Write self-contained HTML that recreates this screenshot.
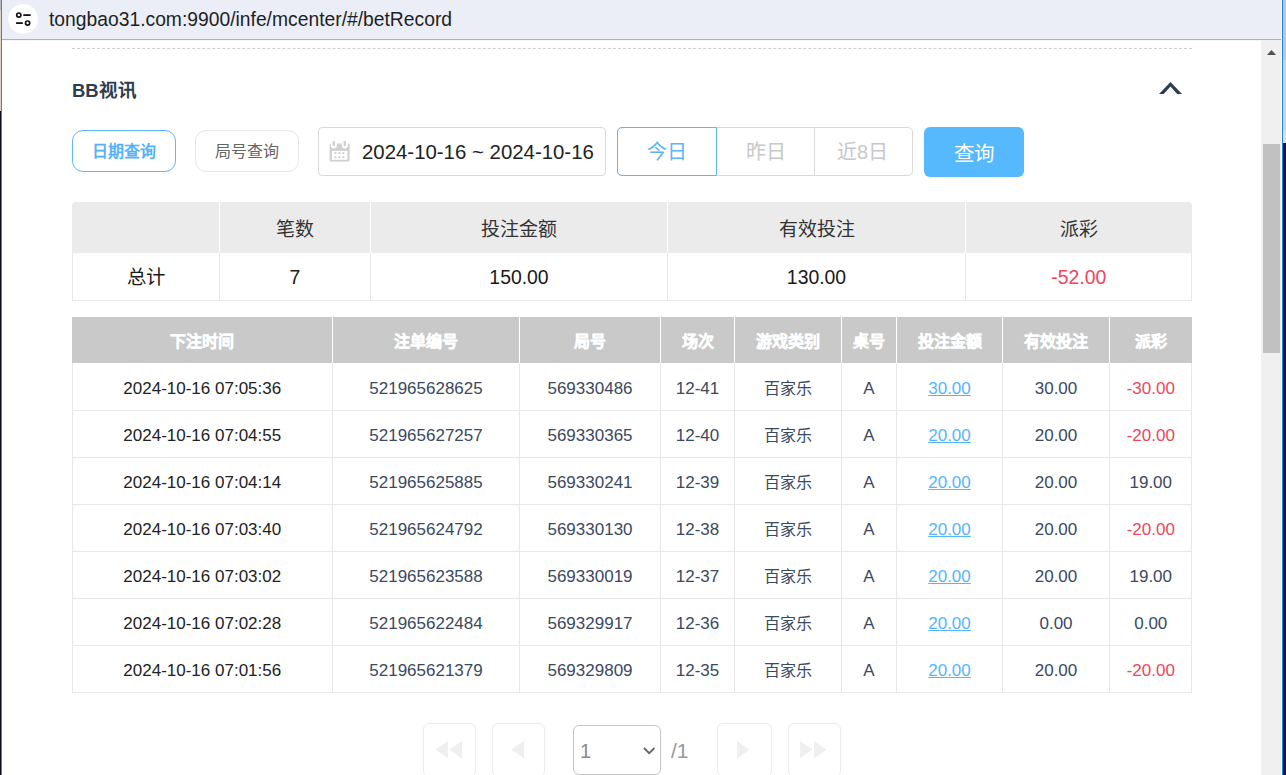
<!DOCTYPE html>
<html lang="zh-CN">
<head>
<meta charset="utf-8">
<style>
*{box-sizing:border-box;margin:0;padding:0}
html,body{width:1286px;height:775px;overflow:hidden}
body{position:relative;background:#fff;font-family:"Liberation Sans",sans-serif;color:#222}
.a{position:absolute}
#deskL{left:0;top:0;width:1px;height:775px;background:linear-gradient(#b9bdc5 0,#b9bdc5 10px,#dcd4c7 10px,#dcd4c7 111px,#0d0b16 111px,#0d0b16 100%)}
#deskR{left:1283px;top:0;width:3px;height:775px;background:linear-gradient(#c3c6cc 0,#c3c6cc 60px,#d2d2d2 60px,#d2d2d2 130px,#e6dccb 130px,#e6dccb 143px,#2a0d40 143px,#2a0d40 100%)}
#bordL{left:1px;top:0;width:1px;height:775px;background:#2b8ae0}
#bordR{left:1282px;top:0;width:1px;height:775px;background:#1f86de}
#addr{left:2px;top:0;width:1280px;height:39px;background:#ebeef7}
#addrline{left:2px;top:39px;width:1280px;height:1px;background:#b0b0b0;box-shadow:0 1px 0 #f6f8fd}
#sb{left:1261px;top:40px;width:20px;height:735px;background:#f0f0f0}
#sbw{left:1281px;top:0;width:1px;height:775px;background:#fdf9f6}
.url{left:49px;top:8.5px;font-size:19.3px;color:#1f1f1f;white-space:nowrap}

.title{left:72px;top:76px;font-size:18.5px;font-weight:bold;color:#2c3e50;white-space:nowrap}
.btn{width:104px;height:42px;border:1px solid #e6e6e6;border-radius:11px;font-size:16px;line-height:42px;text-align:center;color:#666}
.btn.on{border-color:#5db8f9;color:#56b2f6;font-weight:bold}
.dateinp{left:318px;top:127px;width:288px;height:49px;border:1px solid #d9d9d9;border-radius:4px}
.datetxt{left:43px;top:13px;font-size:20.4px;color:#222;white-space:nowrap}
.seg{border:1px solid #d9d9d9;border-radius:5px}
.segon{border:1px solid #5cb6f8;border-radius:5px 0 0 5px}
.segt{height:49px;line-height:51px;text-align:center;font-size:20px}
.qbtn{left:924px;top:127px;width:100px;height:50px;border-radius:6px;background:#56b8fd;color:#fff;font-size:20.5px;line-height:53px;text-align:center}

.sh{top:204.5px;height:50px;line-height:50px;text-align:center;font-size:19px;color:#333}
.sv{top:253.5px;height:47px;line-height:47px;text-align:center;font-size:19.4px;color:#1a1a1a}
.red{color:#f0465a !important}
.dh{top:319px;height:46px;line-height:46px;text-align:center;font-size:16px;font-weight:bold;color:#fff;-webkit-text-stroke:0.4px #fff}
.dv{margin-top:1.8px;height:47px;line-height:47px;text-align:center;font-size:17px;color:#3b4961;white-space:nowrap}
.dv.c1{color:#222}
.lnk{color:#55b6fb}
.lnk u{text-decoration:underline;text-underline-offset:1px}
.cj{font-size:16px}

.pbtn{top:723px;width:53px;height:54px;border:1.5px solid #ececec;border-radius:6px}
.psel{left:573px;top:725px;width:88px;height:50px;border:1px solid #c4c4c4;border-radius:6px}
</style>
</head>
<body>
<div id="deskL" class="a"></div>
<div id="deskR" class="a"></div>
<div id="bordL" class="a"></div>
<div id="bordR" class="a"></div>
<div id="addr" class="a"></div>
<svg class="a" style="left:0;top:0" width="60" height="39">
  <circle cx="23.2" cy="19" r="15" fill="#fff"/>
  <circle cx="18.8" cy="15.1" r="2.1" fill="none" stroke="#111" stroke-width="1.7"/>
  <line x1="23.3" y1="15.1" x2="30.7" y2="15.1" stroke="#111" stroke-width="1.8"/>
  <line x1="16.1" y1="23.1" x2="22.8" y2="23.1" stroke="#111" stroke-width="1.8"/>
  <circle cx="27.6" cy="23.1" r="2.1" fill="none" stroke="#111" stroke-width="1.7"/>
</svg>
<div class="a url">tongbao31.com:9900/infe/mcenter/#/betRecord</div>
<div id="addrline" class="a"></div>
<div id="sb" class="a">
  <svg class="a" style="left:0;top:0" width="20" height="30"><polygon points="6,15 10.5,10 15,15" fill="#505050"/></svg>
  <div class="a" style="left:2px;top:104px;width:17px;height:209px;background:#c1c1c1"></div>
</div>
<div id="sbw" class="a"></div>

<div class="a" style="left:72px;top:48px;width:1120px;height:0;border-top:1px dashed #cfcfcf"></div>
<div class="a title">BB视讯</div>
<svg class="a" style="left:1150px;top:75px" width="40" height="25"><polygon points="9,19 20.5,7 32,19 27.2,19 20.5,11.5 13.7,19" fill="#2c3e50"/></svg>

<div class="a btn on" style="left:72px;top:130px">日期查询</div>
<div class="a btn" style="left:195px;top:130px">局号查询</div>

<div class="a dateinp">
  <svg class="a" style="left:10px;top:13px" width="22" height="22" viewBox="0 0 22 22">
    <rect x="0.6" y="2.6" width="20" height="18" rx="1.6" fill="#d0d0d0"/>
    <rect x="2.9" y="9.9" width="15.5" height="8.9" fill="#fff"/>
    <g fill="#d0d0d0">
      <rect x="5.4" y="11" width="2.1" height="2.1" rx="0.6"/><rect x="9.4" y="11" width="2.1" height="2.1" rx="0.6"/><rect x="13.3" y="11" width="2.1" height="2.1" rx="0.6"/>
      <rect x="5.4" y="15.2" width="2.1" height="2.1" rx="0.6"/><rect x="9.4" y="15.2" width="2.1" height="2.1" rx="0.6"/><rect x="13.3" y="15.2" width="2.1" height="2.1" rx="0.6"/>
    </g>
    <rect x="1.8" y="-1" width="6" height="8.5" rx="3" fill="#fff"/>
    <rect x="12.85" y="-1" width="6" height="8.5" rx="3" fill="#fff"/>
    <rect x="3.6" y="0" width="2.4" height="5.2" rx="1.2" fill="#d0d0d0"/>
    <rect x="14.65" y="0" width="2.4" height="5.2" rx="1.2" fill="#d0d0d0"/>
  </svg>
  <div class="a datetxt">2024-10-16 ~ 2024-10-16</div>
</div>

<div class="a seg" style="left:617px;top:127px;width:296px;height:49px"></div>
<div class="a" style="left:814px;top:127px;width:1px;height:49px;background:#d9d9d9"></div>
<div class="a segon" style="left:617px;top:127px;width:100px;height:49px"></div>
<div class="a segt" style="left:617px;top:127px;width:100px;color:#5cb6f8">今日</div>
<div class="a segt" style="left:717px;top:127px;width:97px;color:#c8c8c8">昨日</div>
<div class="a segt" style="left:813px;top:127px;width:99px;color:#c8c8c8">近8日</div>
<div class="a qbtn">查询</div>
<div class="a" style="left:72px;top:202px;width:1120px;height:51px;background:#ebebeb;border-radius:4px 4px 0 0"></div>
<div class="a" style="left:72px;top:252px;width:1120px;height:49px;border:1px solid #e8e8e8;border-top:none"></div>
<div class="a" style="left:219.0px;top:202px;width:1px;height:51px;background:#fff"></div>
<div class="a" style="left:219.0px;top:253px;width:1px;height:48px;background:#e8e8e8"></div>
<div class="a" style="left:370.0px;top:202px;width:1px;height:51px;background:#fff"></div>
<div class="a" style="left:370.0px;top:253px;width:1px;height:48px;background:#e8e8e8"></div>
<div class="a" style="left:667.0px;top:202px;width:1px;height:51px;background:#fff"></div>
<div class="a" style="left:667.0px;top:253px;width:1px;height:48px;background:#e8e8e8"></div>
<div class="a" style="left:965.0px;top:202px;width:1px;height:51px;background:#fff"></div>
<div class="a" style="left:965.0px;top:253px;width:1px;height:48px;background:#e8e8e8"></div>
<div class="a sv" style="left:72px;width:147.5px">总计</div>
<div class="a sh" style="left:219.5px;width:151.0px">笔数</div>
<div class="a sv" style="left:219.5px;width:151.0px">7</div>
<div class="a sh" style="left:370.5px;width:297.0px">投注金额</div>
<div class="a sv" style="left:370.5px;width:297.0px">150.00</div>
<div class="a sh" style="left:667.5px;width:298.0px">有效投注</div>
<div class="a sv" style="left:667.5px;width:298.0px">130.00</div>
<div class="a sh" style="left:965.5px;width:226.5px">派彩</div>
<div class="a sv red" style="left:965.5px;width:226.5px">-52.00</div>
<div class="a" style="left:72px;top:317px;width:1120px;height:46px;background:#c9c9c9"></div>
<div class="a" style="left:72px;top:363px;width:1120px;height:330px;border:1px solid #e8e8e8;border-top:none"></div>
<div class="a" style="left:332.0px;top:317px;width:1px;height:46px;background:#fff"></div>
<div class="a" style="left:332.0px;top:363px;width:1px;height:330px;background:#e8e8e8"></div>
<div class="a" style="left:519.0px;top:317px;width:1px;height:46px;background:#fff"></div>
<div class="a" style="left:519.0px;top:363px;width:1px;height:330px;background:#e8e8e8"></div>
<div class="a" style="left:660.0px;top:317px;width:1px;height:46px;background:#fff"></div>
<div class="a" style="left:660.0px;top:363px;width:1px;height:330px;background:#e8e8e8"></div>
<div class="a" style="left:734.0px;top:317px;width:1px;height:46px;background:#fff"></div>
<div class="a" style="left:734.0px;top:363px;width:1px;height:330px;background:#e8e8e8"></div>
<div class="a" style="left:841.0px;top:317px;width:1px;height:46px;background:#fff"></div>
<div class="a" style="left:841.0px;top:363px;width:1px;height:330px;background:#e8e8e8"></div>
<div class="a" style="left:896.0px;top:317px;width:1px;height:46px;background:#fff"></div>
<div class="a" style="left:896.0px;top:363px;width:1px;height:330px;background:#e8e8e8"></div>
<div class="a" style="left:1002.0px;top:317px;width:1px;height:46px;background:#fff"></div>
<div class="a" style="left:1002.0px;top:363px;width:1px;height:330px;background:#e8e8e8"></div>
<div class="a" style="left:1109.0px;top:317px;width:1px;height:46px;background:#fff"></div>
<div class="a" style="left:1109.0px;top:363px;width:1px;height:330px;background:#e8e8e8"></div>
<div class="a" style="left:72px;top:410px;width:1120px;height:1px;background:#e8e8e8"></div>
<div class="a" style="left:72px;top:457px;width:1120px;height:1px;background:#e8e8e8"></div>
<div class="a" style="left:72px;top:504px;width:1120px;height:1px;background:#e8e8e8"></div>
<div class="a" style="left:72px;top:551px;width:1120px;height:1px;background:#e8e8e8"></div>
<div class="a" style="left:72px;top:598px;width:1120px;height:1px;background:#e8e8e8"></div>
<div class="a" style="left:72px;top:645px;width:1120px;height:1px;background:#e8e8e8"></div>
<div class="a dh" style="left:72px;width:260.5px">下注时间</div>
<div class="a dh" style="left:332.5px;width:187.0px">注单编号</div>
<div class="a dh" style="left:519.5px;width:141.0px">局号</div>
<div class="a dh" style="left:660.5px;width:74.0px">场次</div>
<div class="a dh" style="left:734.5px;width:107.0px">游戏类别</div>
<div class="a dh" style="left:841.5px;width:55.0px">桌号</div>
<div class="a dh" style="left:896.5px;width:106.0px">投注金额</div>
<div class="a dh" style="left:1002.5px;width:107.0px">有效投注</div>
<div class="a dh" style="left:1109.5px;width:82.5px">派彩</div>
<div class="a dv c1" style="left:72px;top:363px;width:260.5px">2024-10-16 07:05:36</div>
<div class="a dv" style="left:332.5px;top:363px;width:187.0px">521965628625</div>
<div class="a dv" style="left:519.5px;top:363px;width:141.0px">569330486</div>
<div class="a dv" style="left:660.5px;top:363px;width:74.0px">12-41</div>
<div class="a dv" style="left:734.5px;top:363px;width:107.0px"><span class="cj">百家乐</span></div>
<div class="a dv" style="left:841.5px;top:363px;width:55.0px">A</div>
<div class="a dv lnk" style="left:896.5px;top:363px;width:106.0px"><u>30.00</u></div>
<div class="a dv" style="left:1002.5px;top:363px;width:107.0px">30.00</div>
<div class="a dv red" style="left:1109.5px;top:363px;width:82.5px">-30.00</div>
<div class="a dv c1" style="left:72px;top:410px;width:260.5px">2024-10-16 07:04:55</div>
<div class="a dv" style="left:332.5px;top:410px;width:187.0px">521965627257</div>
<div class="a dv" style="left:519.5px;top:410px;width:141.0px">569330365</div>
<div class="a dv" style="left:660.5px;top:410px;width:74.0px">12-40</div>
<div class="a dv" style="left:734.5px;top:410px;width:107.0px"><span class="cj">百家乐</span></div>
<div class="a dv" style="left:841.5px;top:410px;width:55.0px">A</div>
<div class="a dv lnk" style="left:896.5px;top:410px;width:106.0px"><u>20.00</u></div>
<div class="a dv" style="left:1002.5px;top:410px;width:107.0px">20.00</div>
<div class="a dv red" style="left:1109.5px;top:410px;width:82.5px">-20.00</div>
<div class="a dv c1" style="left:72px;top:457px;width:260.5px">2024-10-16 07:04:14</div>
<div class="a dv" style="left:332.5px;top:457px;width:187.0px">521965625885</div>
<div class="a dv" style="left:519.5px;top:457px;width:141.0px">569330241</div>
<div class="a dv" style="left:660.5px;top:457px;width:74.0px">12-39</div>
<div class="a dv" style="left:734.5px;top:457px;width:107.0px"><span class="cj">百家乐</span></div>
<div class="a dv" style="left:841.5px;top:457px;width:55.0px">A</div>
<div class="a dv lnk" style="left:896.5px;top:457px;width:106.0px"><u>20.00</u></div>
<div class="a dv" style="left:1002.5px;top:457px;width:107.0px">20.00</div>
<div class="a dv" style="left:1109.5px;top:457px;width:82.5px">19.00</div>
<div class="a dv c1" style="left:72px;top:504px;width:260.5px">2024-10-16 07:03:40</div>
<div class="a dv" style="left:332.5px;top:504px;width:187.0px">521965624792</div>
<div class="a dv" style="left:519.5px;top:504px;width:141.0px">569330130</div>
<div class="a dv" style="left:660.5px;top:504px;width:74.0px">12-38</div>
<div class="a dv" style="left:734.5px;top:504px;width:107.0px"><span class="cj">百家乐</span></div>
<div class="a dv" style="left:841.5px;top:504px;width:55.0px">A</div>
<div class="a dv lnk" style="left:896.5px;top:504px;width:106.0px"><u>20.00</u></div>
<div class="a dv" style="left:1002.5px;top:504px;width:107.0px">20.00</div>
<div class="a dv red" style="left:1109.5px;top:504px;width:82.5px">-20.00</div>
<div class="a dv c1" style="left:72px;top:551px;width:260.5px">2024-10-16 07:03:02</div>
<div class="a dv" style="left:332.5px;top:551px;width:187.0px">521965623588</div>
<div class="a dv" style="left:519.5px;top:551px;width:141.0px">569330019</div>
<div class="a dv" style="left:660.5px;top:551px;width:74.0px">12-37</div>
<div class="a dv" style="left:734.5px;top:551px;width:107.0px"><span class="cj">百家乐</span></div>
<div class="a dv" style="left:841.5px;top:551px;width:55.0px">A</div>
<div class="a dv lnk" style="left:896.5px;top:551px;width:106.0px"><u>20.00</u></div>
<div class="a dv" style="left:1002.5px;top:551px;width:107.0px">20.00</div>
<div class="a dv" style="left:1109.5px;top:551px;width:82.5px">19.00</div>
<div class="a dv c1" style="left:72px;top:598px;width:260.5px">2024-10-16 07:02:28</div>
<div class="a dv" style="left:332.5px;top:598px;width:187.0px">521965622484</div>
<div class="a dv" style="left:519.5px;top:598px;width:141.0px">569329917</div>
<div class="a dv" style="left:660.5px;top:598px;width:74.0px">12-36</div>
<div class="a dv" style="left:734.5px;top:598px;width:107.0px"><span class="cj">百家乐</span></div>
<div class="a dv" style="left:841.5px;top:598px;width:55.0px">A</div>
<div class="a dv lnk" style="left:896.5px;top:598px;width:106.0px"><u>20.00</u></div>
<div class="a dv" style="left:1002.5px;top:598px;width:107.0px">0.00</div>
<div class="a dv" style="left:1109.5px;top:598px;width:82.5px">0.00</div>
<div class="a dv c1" style="left:72px;top:645px;width:260.5px">2024-10-16 07:01:56</div>
<div class="a dv" style="left:332.5px;top:645px;width:187.0px">521965621379</div>
<div class="a dv" style="left:519.5px;top:645px;width:141.0px">569329809</div>
<div class="a dv" style="left:660.5px;top:645px;width:74.0px">12-35</div>
<div class="a dv" style="left:734.5px;top:645px;width:107.0px"><span class="cj">百家乐</span></div>
<div class="a dv" style="left:841.5px;top:645px;width:55.0px">A</div>
<div class="a dv lnk" style="left:896.5px;top:645px;width:106.0px"><u>20.00</u></div>
<div class="a dv" style="left:1002.5px;top:645px;width:107.0px">20.00</div>
<div class="a dv red" style="left:1109.5px;top:645px;width:82.5px">-20.00</div>

<div class="a pbtn" style="left:422.5px">
  <svg class="a" style="left:0;top:0" width="53" height="54"><polygon points="11.5,25.5 24,17 24,34.5" fill="#efefef"/><polygon points="25.5,25.5 38,17 38,34.5" fill="#efefef"/></svg>
</div>
<div class="a pbtn" style="left:491.5px">
  <svg class="a" style="left:0;top:0" width="53" height="54"><polygon points="18.5,25.5 31,17 31,34.5" fill="#efefef"/></svg>
</div>
<div class="a psel">
  <div class="a" style="left:6px;top:14px;font-size:20px;color:#8a8a8a">1</div>
  <svg class="a" style="left:0;top:0" width="88" height="50"><polyline points="70,22 75.2,27.2 80.4,22" fill="none" stroke="#666" stroke-width="1.8"/></svg>
</div>
<div class="a" style="left:671px;top:739px;font-size:21px;color:#999">/1</div>
<div class="a pbtn" style="left:717px;width:54.5px">
  <svg class="a" style="left:0;top:0" width="53" height="54"><polygon points="19,17 19,34.5 31.5,25.5" fill="#efefef"/></svg>
</div>
<div class="a pbtn" style="left:787.5px">
  <svg class="a" style="left:0;top:0" width="53" height="54"><polygon points="11,17 11,34.5 23.5,25.5" fill="#efefef"/><polygon points="25,17 25,34.5 37.5,25.5" fill="#efefef"/></svg>
</div>
<!--CONTENT-->
</body>
</html>
